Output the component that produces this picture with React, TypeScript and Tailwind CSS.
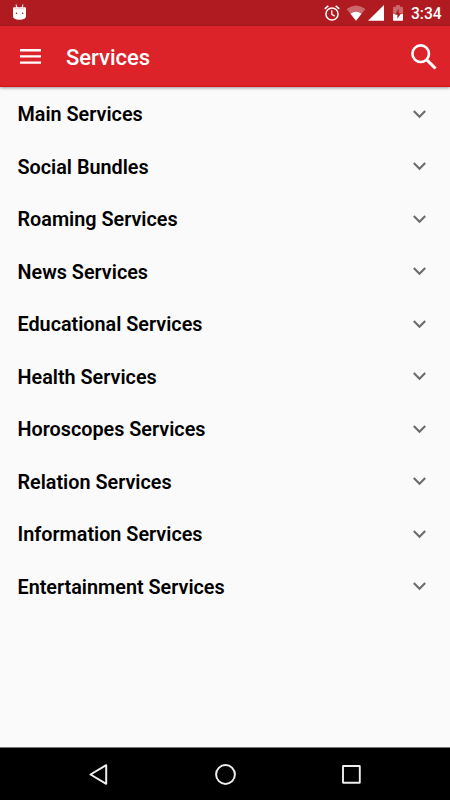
import React from "react";

const services = [
  "Main Services",
  "Social Bundles",
  "Roaming Services",
  "News Services",
  "Educational Services",
  "Health Services",
  "Horoscopes Services",
  "Relation Services",
  "Information Services",
  "Entertainment Services",
];

function StatusBar() {
  return (
    <div className="flex h-[26px] shrink-0 items-start bg-[#af1b21] pl-[13px] pr-2 text-white">
      <svg className="mt-1 h-4 w-[13px]" viewBox="0 0 13 16" fill="none">
        <path d="M3 .5 4 4M10 .5 9 4" stroke="#fbe3e4" strokeWidth="1.1" />
        <path d="M0 4.3Q0 3.3 1 3.3H12Q13 3.3 13 4.3V12Q13 15.8 6.5 15.8T0 12Z" fill="#fff" />
        <path d="M1.5 4.8H11.5" stroke="#efb6b8" strokeWidth=".8" />
        <circle cx="3.5" cy="9.2" r=".8" fill="#af1b21" />
        <circle cx="9.7" cy="9.2" r=".8" fill="#af1b21" />
      </svg>
      <svg className="ml-auto mt-[5px] h-4 w-4" viewBox="0 0 16 16" fill="none" stroke="#fff">
        <circle cx="8" cy="9" r="6.1" strokeWidth="1.5" />
        <path d="M.7 3.8 4.3.8M15.3 3.8 11.7.8" strokeWidth="1.5" />
        <path d="M7.8 5.3V9.3L10.7 11.1" strokeWidth="1.3" />
      </svg>
      <svg className="ml-[6px] mt-[5px] h-4 w-5" viewBox="0 0 20 16">
        <path d="M.6 3.9Q10-3.1 19.4 3.9L10 15.8Z" fill="#fff" fillOpacity=".34" />
        <path d="M4.5 8.8Q10 4.9 15.5 8.8L10 15.8Z" fill="#fff" />
      </svg>
      <svg className="ml-[2px] mt-[5px] h-4 w-4" viewBox="0 0 16 16">
        <path d="M16 0V15.7H0Z" fill="#fff" />
      </svg>
      <svg className="ml-[9px] mt-[5px] h-4 w-[10px]" viewBox="0 0 10 16">
        <path d="M3.2 0H6.8V1.7H9.2Q10 1.7 10 2.5V9H0V2.5Q0 1.7.8 1.7H3.2Z" fill="#fff" fillOpacity=".34" />
        <path d="M0 9H10V15Q10 15.8 9.2 15.8H.8Q0 15.8 0 15Z" fill="#fff" />
        <path d="M5.8 3.8 2 9.7H4.4V13.8L8.2 8.2H5.8Z" fill="#af1b21" />
      </svg>
      <span className="ml-2 mt-[4px] w-[31px] whitespace-nowrap text-[15.6px] font-medium leading-[20px]">3:34</span>
    </div>
  );
}

function AppBar() {
  return (
    <header className="z-10 flex h-[61px] shrink-0 items-center border-b border-[#d51418] bg-[#dc2329] pl-5 pr-[13px] text-white shadow-[0_1px_3px_rgba(0,0,0,0.4)]">
      <svg className="h-[15px] w-[21px]" viewBox="0 0 21 15" fill="#fff">
        <path d="M0 0H21V2.4H0ZM0 6.2H21V8.6H0ZM0 12.4H21V14.8H0Z" />
      </svg>
      <h1 className="ml-[25px] mt-1 text-[22px] font-medium leading-[28px]">Services</h1>
      <svg className="ml-auto mt-[1px] h-[26px] w-[26px]" viewBox="0 0 26 26" fill="none" stroke="#fff">
        <circle cx="9.7" cy="9.7" r="8.3" strokeWidth="2.6" />
        <path d="m15.8 15.8 8.7 8.7" strokeWidth="3.1" />
      </svg>
    </header>
  );
}

function NavigationBar() {
  return (
    <nav className="flex h-[53px] shrink-0 items-center justify-between border-t border-[#777] bg-black pl-[89px] pr-[89px]">
      <svg className="h-[21px] w-[20px]" viewBox="0 0 20 21" fill="none" stroke="#eee" strokeWidth="2" strokeLinejoin="round">
        <path d="M17.2 1.2V19.8L1.5 10.5Z" />
      </svg>
      <svg className="mr-[1px] h-[21px] w-[21px]" viewBox="0 0 21 21" fill="none" stroke="#eee" strokeWidth="2">
        <circle cx="10.5" cy="10.5" r="9.4" />
      </svg>
      <svg className="h-[19px] w-[19px]" viewBox="0 0 19 19" fill="none" stroke="#eee" strokeWidth="1.9">
        <rect x="1" y="1" width="16.8" height="16.8" rx=".4" />
      </svg>
    </nav>
  );
}

export default function App() {
  return (
    <div className="flex h-[800px] w-[450px] flex-col overflow-hidden bg-[#fafafa] font-['Roboto',sans-serif]">
      <StatusBar />
      <AppBar />
      <main className="flex-1 pt-[1px]">
        <ul>
          {services.map((service) => (
            <li key={service} className="flex h-[52.5px] items-center justify-between pl-[17.5px] pr-6 text-[19.8px] font-semibold leading-[25px] text-black">
              <span className="pt-[1px]">{service}</span>
              <svg className="h-[9px] w-[13px]" viewBox="0 0 13 9" fill="none" stroke="#6b6b6b" strokeWidth="2.1">
                <path d="m.8 1 5.7 5.7L12.2 1" />
              </svg>
            </li>
          ))}
        </ul>
      </main>
      <NavigationBar />
    </div>
  );
}
